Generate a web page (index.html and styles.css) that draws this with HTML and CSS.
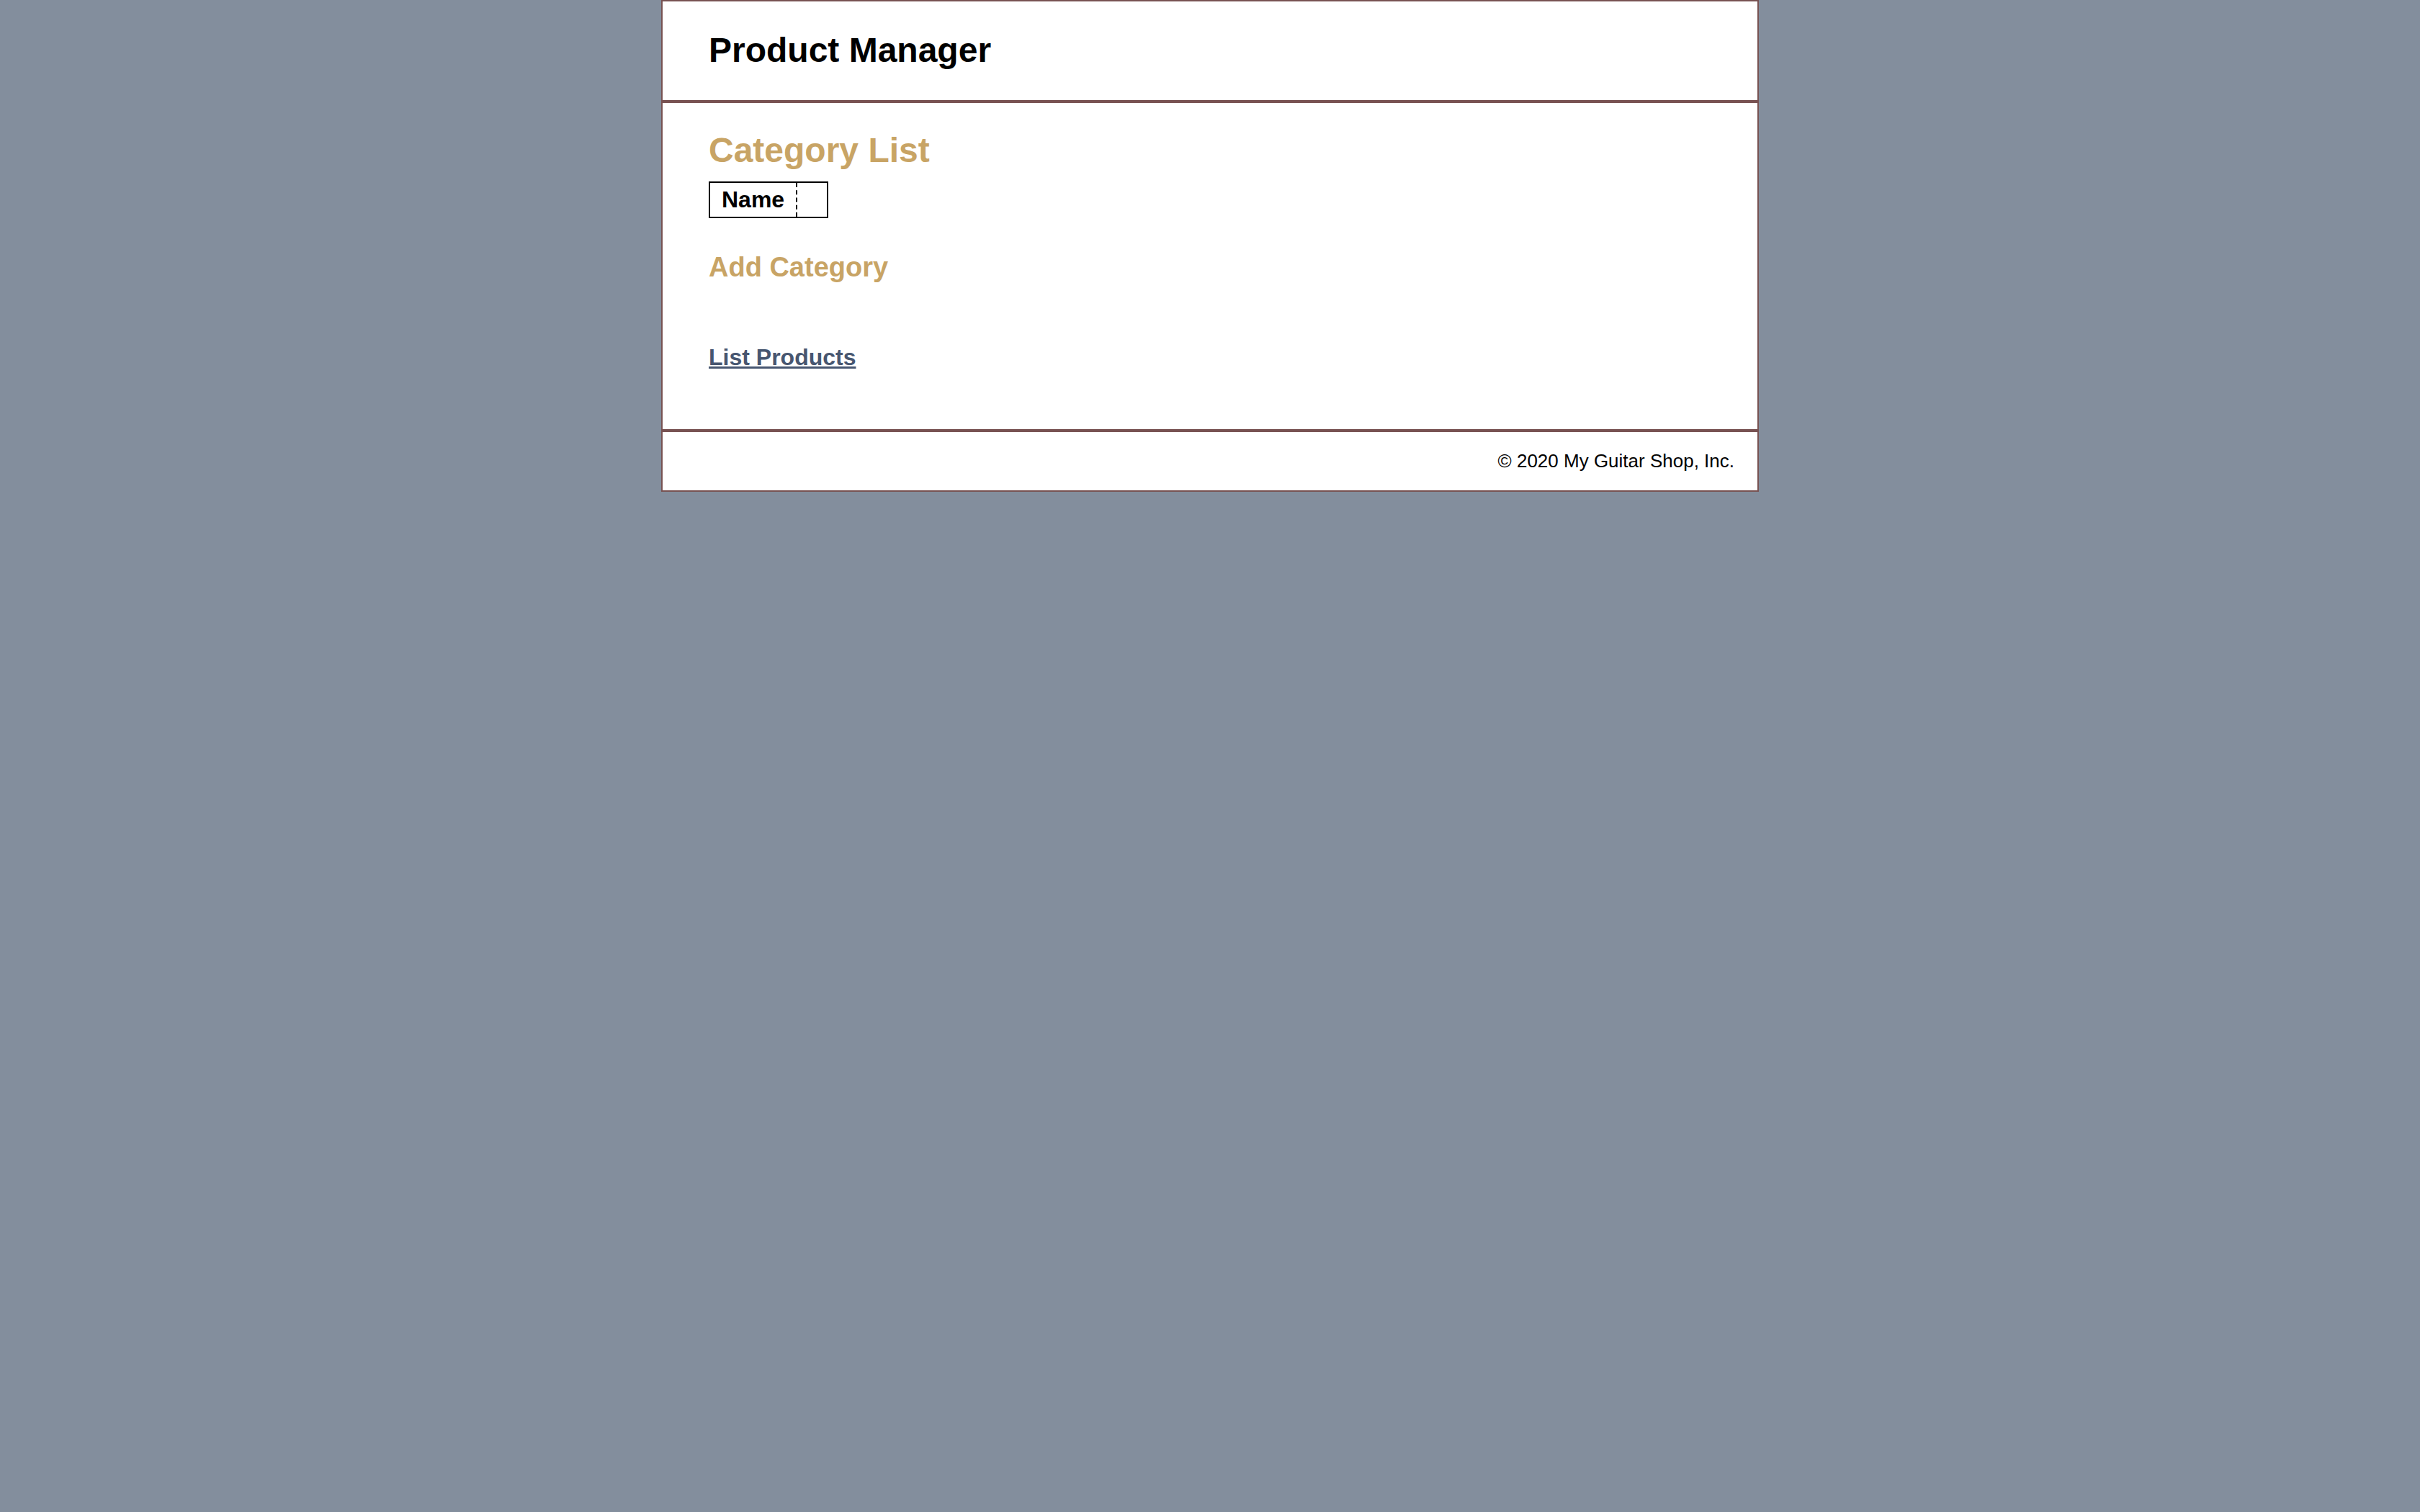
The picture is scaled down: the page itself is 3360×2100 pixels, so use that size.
FILE: index.html
```html
<!DOCTYPE html>
<html lang="en">
<head>
<meta charset="utf-8">
<title>My Guitar Shop</title>
<link rel="stylesheet" href="styles.css">
</head>
<body>
<div class="page">
  <header class="site-header">
    <h1 class="site-title">Product Manager</h1>
  </header>
  <main class="main">
    <h1 class="section-title">Category List</h1>
    <table class="cat-table">
      <tr>
        <th class="cat-name">Name</th>
        <th class="cat-empty">&nbsp;</th>
      </tr>
    </table>
    <h2 class="sub-title">Add Category</h2>
    <p class="nav-link"><a href="#">List Products</a></p>
  </main>
  <footer class="site-footer">
    <p class="copyright">&copy; 2020 My Guitar Shop, Inc.</p>
  </footer>
</div>
</body>
</html>
```
FILE: styles.css
```css
html, body {
  margin: 0;
  padding: 0;
}
body {
  background: #838e9d;
  font-family: "Liberation Sans", Arial, sans-serif;
  color: #000;
}
.page {
  width: 1520px;
  margin: 0 auto;
  background: #fff;
  border: 2px solid #785252;
}
.site-header {
  padding: 41px 64px 42px;
  border-bottom: 4px solid #785252;
}
.site-title {
  margin: 0;
  font-size: 48px;
  line-height: 54px;
  font-weight: bold;
}
.main {
  padding: 39px 64px 82px;
  border-bottom: 4px solid #785252;
}
.section-title {
  margin: 0 0 16px;
  font-size: 48px;
  line-height: 54px;
  color: #c8a465;
}
.cat-table {
  border: 2px solid #000;
  border-collapse: separate;
  border-spacing: 0;
  margin: 0 0 47px;
}
.cat-table th {
  font-size: 32px;
  line-height: 36px;
  padding: 5px 16px 6px;
  text-align: left;
}
.cat-name {
  border-right: 2px dashed #000;
}
.sub-title {
  margin: 0 0 86px;
  font-size: 38px;
  line-height: 42px;
  color: #c8a465;
}
.nav-link {
  margin: 0;
  font-size: 32px;
  line-height: 36px;
  font-weight: bold;
}
.nav-link a {
  color: #475670;
}
.site-footer {
  padding: 26px 32px 26px 0;
}
.copyright {
  margin: 0;
  text-align: right;
  font-size: 26px;
  line-height: 29px;
}
```
